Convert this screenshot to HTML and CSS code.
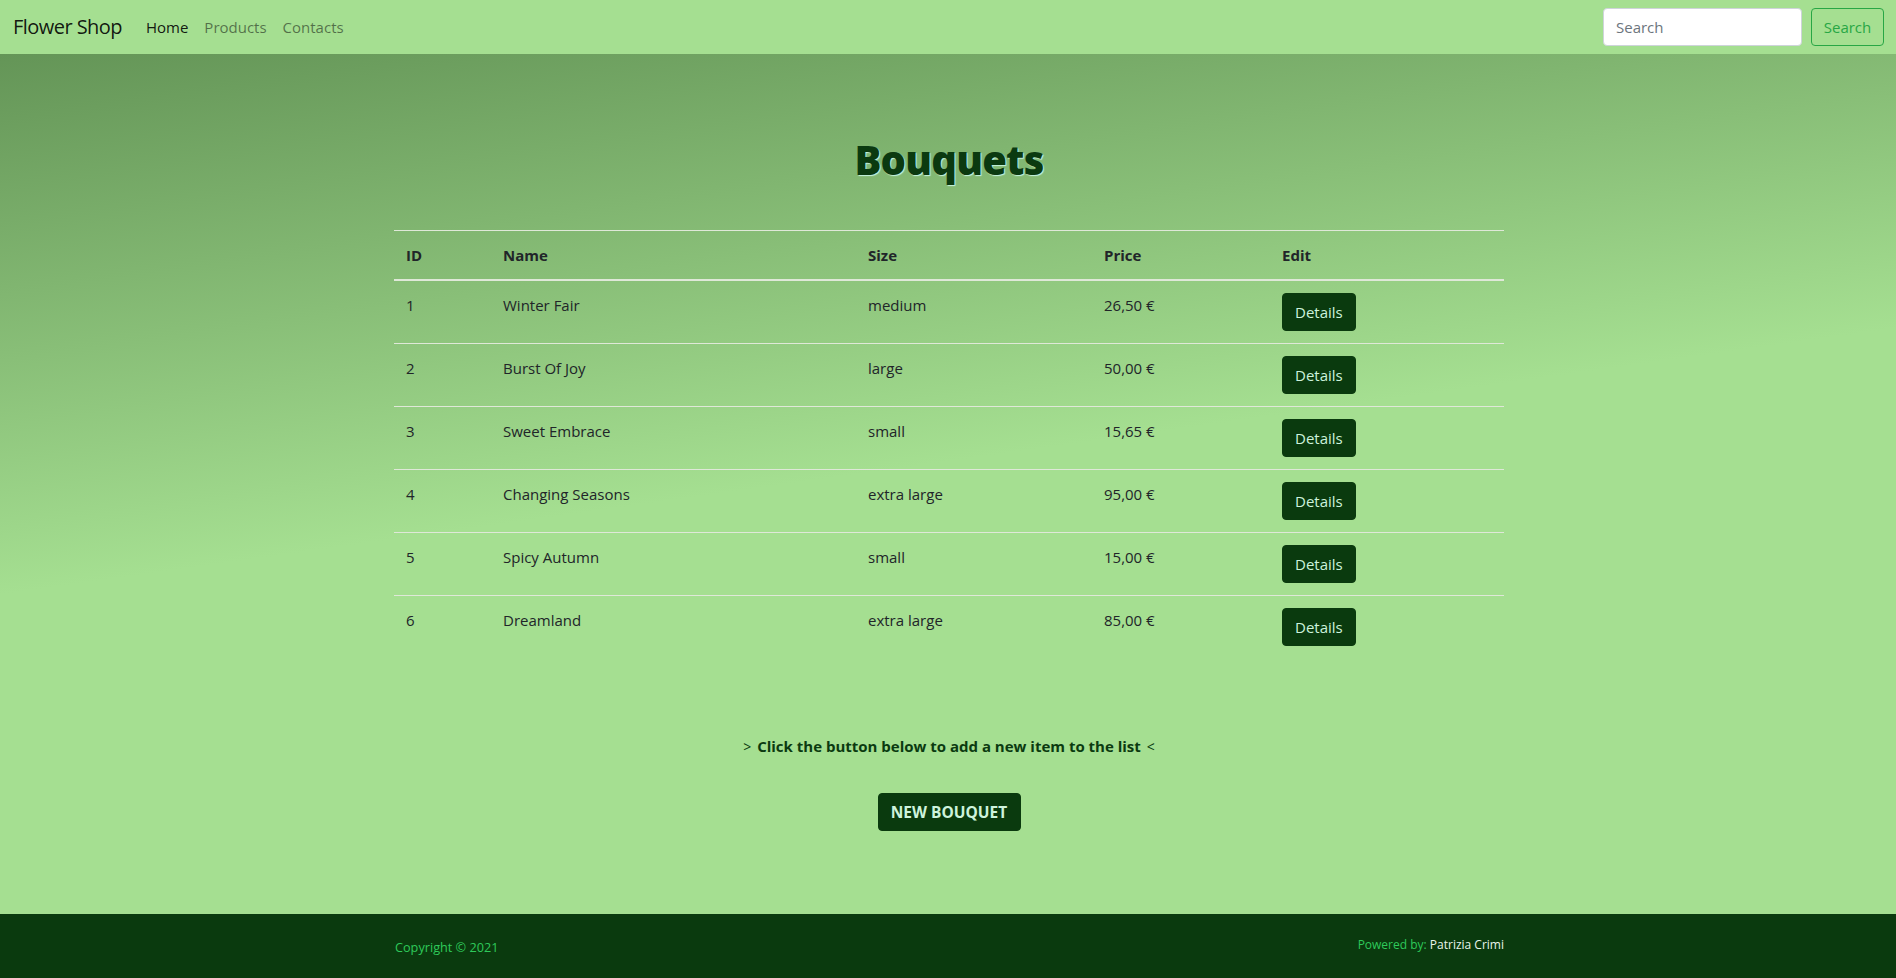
FILE: index.html
```html
<!DOCTYPE html>
<html lang="en">
<head>
<meta charset="utf-8">
<title>Flower Shop</title>
<link rel="stylesheet" href="styles.css">
</head>
<body>
<nav class="navbar">
  <div class="nav-left">
    <a class="brand" href="#">Flower Shop</a>
    <ul class="nav-links">
      <li><a class="nav-link active" href="#">Home</a></li>
      <li><a class="nav-link" href="#">Products</a></li>
      <li><a class="nav-link" href="#">Contacts</a></li>
    </ul>
  </div>
  <form class="search-form">
    <input class="search-input" type="search" placeholder="Search">
    <button class="search-btn" type="button">Search</button>
  </form>
</nav>

<main class="main">
  <div class="container">
    <h1 class="title">Bouquets</h1>
    <table class="table">
      <colgroup>
        <col class="c-id"><col class="c-name"><col class="c-size"><col class="c-price"><col class="c-edit">
      </colgroup>
      <thead>
        <tr><th>ID</th><th>Name</th><th>Size</th><th>Price</th><th>Edit</th></tr>
      </thead>
      <tbody>
        <tr><td>1</td><td>Winter Fair</td><td>medium</td><td>26,50 €</td><td><button class="btn-dark">Details</button></td></tr>
        <tr><td>2</td><td>Burst Of Joy</td><td>large</td><td>50,00 €</td><td><button class="btn-dark">Details</button></td></tr>
        <tr><td>3</td><td>Sweet Embrace</td><td>small</td><td>15,65 €</td><td><button class="btn-dark">Details</button></td></tr>
        <tr><td>4</td><td>Changing Seasons</td><td>extra large</td><td>95,00 €</td><td><button class="btn-dark">Details</button></td></tr>
        <tr><td>5</td><td>Spicy Autumn</td><td>small</td><td>15,00 €</td><td><button class="btn-dark">Details</button></td></tr>
        <tr><td>6</td><td>Dreamland</td><td>extra large</td><td>85,00 €</td><td><button class="btn-dark">Details</button></td></tr>
      </tbody>
    </table>
    <p class="hint"><span class="arrow">&gt;</span> Click the button below to add a new item to the list <span class="arrow">&lt;</span></p>
    <div class="new-wrap"><button class="btn-dark btn-new">NEW BOUQUET</button></div>
  </div>
</main>

<footer class="footer">
  <div class="footer-inner">
    <span class="copy">Copyright © 2021</span>
    <span class="powered">Powered by: <span class="author">Patrizia Crimi</span></span>
  </div>
</footer>
</body>
</html>
```

FILE: styles.css
```css
* { box-sizing: border-box; }

html, body {
  margin: 0;
  padding: 0;
}

body {
  font-family: "Segoe UI", "Open Sans", "Noto Sans", sans-serif;
  font-size: 16px;
  line-height: 1.5;
  color: #212529;
  background: #a5df91;
  min-height: 978px;
  display: flex;
  flex-direction: column;
}

/* Navbar */
.navbar {
  height: 54px;
  background: #a5df91;
  display: flex;
  align-items: center;
  justify-content: space-between;
  padding: 0 12px 0 13px;
}

.nav-left {
  display: flex;
  align-items: center;
}

.brand {
  font-size: 20px;
  line-height: 30px;
  color: rgba(0, 0, 0, 0.9);
  text-decoration: none;
  margin-right: 16px;
  letter-spacing: -0.55px;
}

.nav-links {
  list-style: none;
  margin: 0;
  padding: 0;
  display: flex;
}

.nav-link {
  display: block;
  padding: 8px 8px;
  color: rgba(0, 0, 0, 0.5);
  text-decoration: none;
  font-size: 15px;
}

.nav-link.active {
  color: rgba(0, 0, 0, 0.9);
}

.search-form {
  display: flex;
  align-items: center;
  gap: 9px;
}

.search-input {
  width: 199px;
  height: 38px;
  border: 1px solid #ced4da;
  border-radius: 4px;
  background: #fff;
  padding: 6px 12px;
  font-family: inherit;
  font-size: 15px;
  color: #495057;
}

.search-input::placeholder {
  color: #6c757d;
}

.search-btn {
  height: 38px;
  width: 73px;
  border: 1px solid #28a745;
  border-radius: 4px;
  background: transparent;
  color: #28a745;
  font-family: inherit;
  font-size: 15px;
  padding: 0;
}

/* Main */
.main {
  flex: 1;
  background: linear-gradient(172deg, #649557 0%, #a5df91 48%, #a5df91 100%);
  padding: 82px 0 81px 2px;
}

.container {
  width: 1110px;
  margin: 0 auto;
}

.title {
  margin: 0 0 46px;
  text-align: center;
  font-size: 40px;
  line-height: 48px;
  font-weight: 800;
  color: #0b3a10;
  letter-spacing: -0.8px;
  text-shadow: 1px 1px 1px #c6f4e0;
}

.table {
  width: 100%;
  border-collapse: collapse;
  table-layout: fixed;
}

.c-id { width: 97px; }
.c-name { width: 365px; }
.c-size { width: 236px; }
.c-price { width: 178px; }
.c-edit { width: 234px; }

.table th,
.table td {
  text-align: left;
  vertical-align: top;
  padding: 12px;
  border-top: 1px solid #dfe8d8;
  font-size: 15px;
  line-height: 24px;
}

.table th {
  font-weight: 700;
  border-bottom: 2px solid #dfe8d8;
}

.table td {
  font-weight: 400;
}

.btn-dark {
  background: #0a3a0e;
  color: #cdf3dc;
  border: 1px solid #0a3a0e;
  border-radius: 4px;
  height: 38px;
  padding: 0 12px;
  font-family: inherit;
  font-size: 15px;
  line-height: 36px;
  display: block;
}

.hint {
  margin: 76px 0 0;
  text-align: center;
  font-weight: 700;
  color: #0b3a10;
  font-size: 15px;
  line-height: 24px;
}

.arrow {
  font-size: 14px;
  font-weight: 400;
  padding: 0 2px;
}

.new-wrap {
  display: flex;
  justify-content: center;
  margin-top: 34px;
}

.btn-new {
  font-weight: 700;
  padding: 0;
  width: 143px;
  font-size: 15.5px;
  letter-spacing: 0;
}

/* Footer */
.footer {
  height: 64px;
  background: #0a3a0e;
  padding-left: 2px;
}

.footer-inner {
  width: 1110px;
  margin: 0 auto;
  height: 100%;
  display: flex;
  justify-content: space-between;
  align-items: center;
  line-height: 18px;
}

.copy {
  color: #2ec95a;
  font-size: 12.7px;
  padding-left: 1px;
  padding-top: 2px;
}

.powered {
  color: #2ec95a;
  font-size: 12px;
  padding-bottom: 2px;
}

.author {
  color: #e8f5ec;
}
```
